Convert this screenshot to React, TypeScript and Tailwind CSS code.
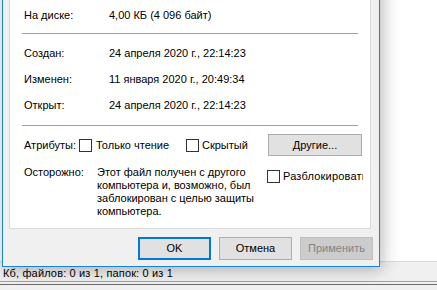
import React from 'react';

const Checkbox: React.FC = () => (
  <span className="inline-block w-[13px] h-[13px] border border-[#333333] bg-white shrink-0" />
);

const InfoRow: React.FC<{ label: string; value: string }> = ({ label, value }) => (
  <div className="flex items-center h-[26px] pl-[14px]">
    <span className="w-[85px] shrink-0">{label}</span>
    <span>{value}</span>
  </div>
);

const Separator: React.FC<{ className?: string }> = ({ className }) => (
  <div className={`ml-[12px] w-[336px] h-px bg-[#a0a0a0] ${className ?? ''}`} />
);

const DialogButton: React.FC<{ label: string; kind?: 'default' | 'normal' | 'disabled' }> = ({
  label,
  kind = 'normal',
}) => {
  const styles =
    kind === 'default'
      ? 'border-2 border-[#0078d7] bg-[#e1e1e1] text-black'
      : kind === 'disabled'
      ? 'border border-[#bfbfbf] bg-[#cccccc] text-[#838383]'
      : 'border border-[#adadad] bg-[#e1e1e1] text-black';
  return (
    <div className={`w-[73px] h-[23px] flex items-center justify-center ${styles}`}>{label}</div>
  );
};

export default function App() {
  return (
    <div className="relative w-[437px] h-[290px] overflow-hidden bg-white text-[11px] leading-[13px] text-black font-['Liberation_Sans',Arial,sans-serif]">
      {/* Explorer window behind the dialog */}
      <div className="flex flex-col h-full">
        <div className="flex-1 bg-white" />
        <div className="h-[20px] shrink-0 border-t border-[#d9d9d9] bg-[#f0f0f0] flex items-center pl-[3px] pt-[3px] whitespace-nowrap tracking-[0.15px]">
          Кб, файлов: 0 из 1, папок: 0 из 1
        </div>
        <div className="h-px shrink-0 bg-[#a0a0a0]" />
        <div className="h-[2px] shrink-0 bg-[#f0f0f0]" />
        <div className="h-px shrink-0 bg-[#6d6d6d]" />
        <div className="h-[5px] shrink-0 bg-[#f0f0f0]" />
      </div>

      {/* Properties dialog */}
      <div className="absolute left-[2px] top-[-20px] w-[378px] h-[287px] border border-[#1883d7] bg-[#f0f0f0] shadow-[2px_2px_16px_rgba(0,0,0,0.3)] flex flex-col">
        <div className="ml-[6px] mt-[4px] w-[362px] h-[244px] border border-[#d9d9d9] bg-white pt-[16px]">
          <InfoRow label="На диске:" value="4,00 КБ (4 096 байт)" />
          <Separator className="mt-[5px]" />

          <div className="mt-[6px]">
            <InfoRow label="Создан:" value="24 апреля 2020 г., 22:14:23" />
            <InfoRow label="Изменен:" value="11 января 2020 г., 20:49:34" />
            <InfoRow label="Открыт:" value="24 апреля 2020 г., 22:14:23" />
          </div>
          <Separator className="mt-[7px]" />

          {/* Attributes */}
          <div className="mt-[8px] h-[22px] flex items-center pl-[14px] whitespace-nowrap">
            <span className="w-[55px] shrink-0">Атрибуты:</span>
            <div className="w-[107px] shrink-0 flex items-center gap-[4px]">
              <Checkbox />
              <span>Только чтение</span>
            </div>
            <div className="w-[82px] shrink-0 flex items-center gap-[3px]">
              <Checkbox />
              <span>Скрытый</span>
            </div>
            <div className="w-[94px] h-[22px] shrink-0 border border-[#adadad] bg-[#e1e1e1] flex items-center justify-center">
              Другие...
            </div>
          </div>

          {/* Security warning */}
          <div className="mt-[10px] flex pl-[14px]">
            <span className="w-[73px] shrink-0">Осторожно:</span>
            <p className="w-[164px] shrink-0">
              Этот файл получен с другого
              <br />
              компьютера и, возможно, был
              <br />
              заблокирован с целью защиты
              <br />
              компьютера.
            </p>
            <div className="ml-[6px] mt-[4px] w-[96px] h-[13px] flex items-center gap-[3px] overflow-hidden whitespace-nowrap">
              <Checkbox />
              <span className="tracking-[0.2px]">Разблокировать</span>
            </div>
          </div>
        </div>

        {/* Bottom buttons */}
        <div className="mt-[8px] pr-[6px] flex justify-end gap-[8px]">
          <DialogButton label="OK" kind="default" />
          <DialogButton label="Отмена" />
          <DialogButton label="Применить" kind="disabled" />
        </div>
      </div>
    </div>
  );
}
